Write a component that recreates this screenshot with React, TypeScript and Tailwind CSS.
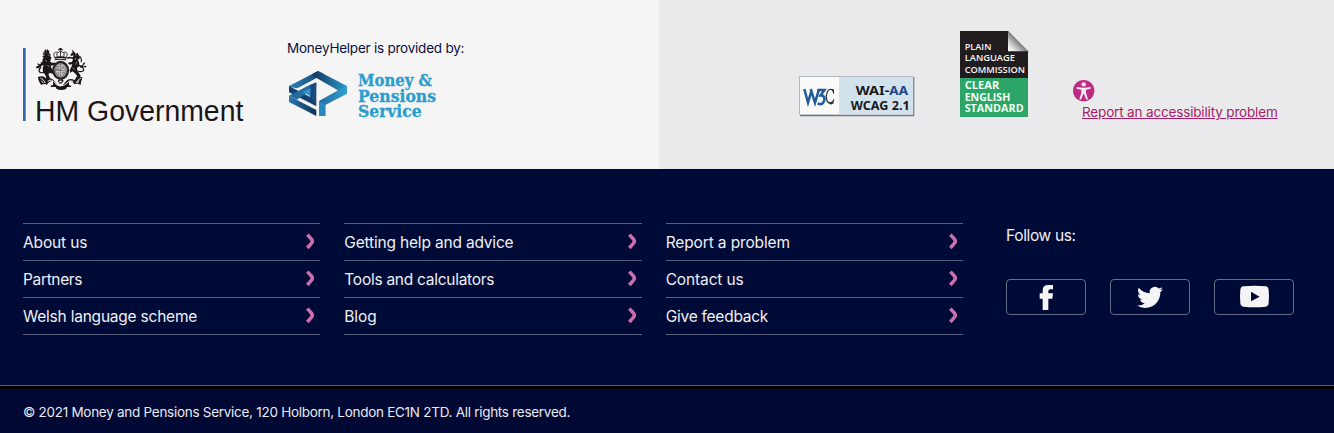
import React from "react";

const columns = [
  [
    { label: "About us", tracking: "tracking-[-0.130px]" },
    { label: "Partners", tracking: "tracking-[-0.350px]" },
    { label: "Welsh language scheme", tracking: "tracking-[-0.220px]" },
  ],
  [
    { label: "Getting help and advice", tracking: "tracking-[-0.180px]" },
    { label: "Tools and calculators", tracking: "tracking-[-0.270px]" },
    { label: "Blog", tracking: "tracking-[-0.130px]" },
  ],
  [
    { label: "Report a problem", tracking: "tracking-[-0.130px]" },
    { label: "Contact us", tracking: "tracking-[-0.130px]" },
    { label: "Give feedback", tracking: "tracking-[-0.250px]" },
  ],
];

function Crest() {
  return (
    <g fill="#1c1518">
      {/* crown */}
      <path d="M133 39h7v6h-7zM129 43h15v3h-15z" />
      <path
        d="M120 68C112 58 118 49 127 52c4 2 7-3 9.500-5c2 2 6 7 10 5c9-3 14 6 6 16M127 53c-3 5-1 10 2 14M146 53c3 5 1 10-2 14M136.500 48v19"
        fill="none"
        stroke="#1c1518"
        strokeWidth="2.600"
      />
      <path d="M118 66q18-5 37 0l-1 5q-17-4-35 0zM119 73q18-4 35 0v3q-18-4-35 0z" />
      {/* shield */}
      <ellipse cx="137" cy="106" rx="22" ry="25" fill="#f5f5f5" stroke="#1c1518" strokeWidth="7" />
      <ellipse cx="137" cy="106" rx="16.500" ry="19.500" fill="#cfcdce" stroke="#1c1518" strokeWidth="1.500" />
      <path
        d="M121 106h32M137 87v38M124 94h10M124 99h9M123 103h11M141 94l8 8M148 93l-7 9M126 111v8M131 110v13M142 112h8M141 117h9M143 122h5"
        fill="none"
        stroke="#4a4346"
        strokeWidth="1.800"
      />
      <ellipse cx="137" cy="106" rx="22" ry="25" fill="none" stroke="#b8b6b7" strokeWidth="1" strokeDasharray="2 3" />
      {/* lion */}
      <path d="M88 47l3-4 3 4 3-5 3 5 3-2-1 8 5 6-1 6 4 3-3 5-1 8 8 3 6-2 2 4-7 5-8 1 3 9 4 8-1 8-8-4-5 5 5 11-3 6-9 1-4-4 5-3-3-9-7-9-1-12 3-9-6 2-8 5-5-3 7-5 8-7 1-9 3-6-5-3 5-3-3-5z" />
      <path d="M86 48l3 4M84 55l5 1M83 62l6-1M94 50v3M98 59l5 2M91 76l5 4M97 91l6 4" stroke="#f5f5f5" strokeWidth="1.500" />
      <path d="M88 112c-13 4-19-3-14-10c5-5 3-10-1-9c-5 1-4 7-10 4M75 101l-9-7M76 91l-8-5" fill="none" stroke="#1c1518" strokeWidth="3.600" />
      <path d="M76 83l12-4 2 4-10 6z" />
      {/* unicorn */}
      <path d="M171 43l12 14 5-4 3 7 4 6-2 7-5 0 4 9 1 7 8 3 3 6-6 1-5-5-7 4 1 8 5 8 5 8-3 7-8 3-4-3 5-5-7-9-8-6-6 5-2-8 6-12 2-7-8 2-5-4 4-3 8-1 3-9-9-2-7 2-3-4 7-3 12 2 2-6-8 2-2-4 7-7z" />
      <path d="M180 58l4 3M183 68l-3 7M186 80l-4 9M173 99l6 4" stroke="#f5f5f5" strokeWidth="1.500" />
      <path d="M189 108c13 5 20-1 15-9c-4-5-2-12 4-9M205 95l9 0M204 87l6-4M194 63q8 10 4 19" fill="none" stroke="#1c1518" strokeWidth="3.400" />
      {/* scroll */}
      <path d="M69 127c1 9 3 14 10 23q8-5 17-1q7-12 18-11v13q-9-2-7 5l15 0q1 9 16 9q18 0 18-9l12 0q3-5-6-5v-13q10-1 17 10q9-4 18 2c0-11 5-17 5-23q-8-3-17-1l-6 9q-17-8-25 3l-11 13q-9 5-18-3l-9-13q-9-10-22-2l-6-8q-10-3-19 1z" />
      <path
        d="M76 129q10 3 15 15M98 139q13-8 20 3q5 10 18 11q13-1 20-9q7-11 19-5M198 129q-9 4-15 15M79 137l6 7M192 137l-5 8"
        fill="none"
        stroke="#f5f5f5"
        strokeWidth="2.800"
      />
      <path d="M128 138l5-7 4 4 5-4 4 7-7 8h-5z" />
      <path d="M133 137h7v5h-7z" fill="#f5f5f5" />
    </g>
  );
}

function GovernmentLogo() {
  return (
    <svg className="block h-[95px] w-[240px]" viewBox="0 0 720 285" role="img">
      <rect x="24" y="39" width="8" height="219" fill="#2e6ba5" />
      <Crest />
      <text
        x="60"
        y="259"
        textLength="625"
        lengthAdjust="spacingAndGlyphs"
        fontFamily="'Liberation Sans', Arial, sans-serif"
        fontSize="90"
        fill="#1c1518"
      >
        HM Government
      </text>
    </svg>
  );
}

function PensionsLogo() {
  return (
    <svg className="block h-[60px] w-[170px]" viewBox="0 90 510 180" role="img">
      <defs>
        <linearGradient id="top" x1="0" x2="1">
          <stop offset="0" stopColor="#12365f" />
          <stop offset="1" stopColor="#2d9bcf" />
        </linearGradient>
        <linearGradient id="side" x1="0" x2="1">
          <stop offset="0" stopColor="#2a86ba" />
          <stop offset="1" stopColor="#163f6c" />
        </linearGradient>
        <linearGradient id="base" x1="0" x2="1">
          <stop offset="0" stopColor="#277aaf" />
          <stop offset="1" stopColor="#12305a" />
        </linearGradient>
        <linearGradient id="bowl" x1="0" x2="1">
          <stop offset="0" stopColor="#226c9f" />
          <stop offset="1" stopColor="#2f9fd2" />
        </linearGradient>
      </defs>
      <g transform="translate(18 96)">
        <path d="M9 57L96 12L114 21L34 64L9 60Z" fill="url(#side)" />
        <path d="M96 12L183 57V66L165 77L150 67L80 26V20Z" fill="url(#top)" />
        <path d="M183 57V80L118 114V147H100V101L158 69Z" fill="url(#bowl)" />
        <path d="M100 101L118 114V147H100Z" fill="#2887bb" />
        <path d="M9 57L91 100V118L9 76Z" fill="#16426f" />
        <path d="M9 86L37 83L91 111V118L48 96L91 118V147L9 105Z" fill="none" />
        <path d="M9 86L91 129V147L9 105Z" fill="url(#base)" />
        <path d="M9 86L72 53L91 47V57L33 98Z" fill="#246c9f" />
        <path d="M72 55L91 46V101L72 91Z" fill="#1b4b7c" />
        <path d="M50 76L73 64V88Z" fill="#2f99cc" />
      </g>
      <g fill="#2b9dcd" stroke="#2b9dcd" strokeWidth="1" fontFamily="'DejaVu Serif', serif" fontWeight="700" fontSize="50">
        <text x="234" y="152" textLength="222" lengthAdjust="spacingAndGlyphs">Money &amp;</text>
        <text x="234" y="200" textLength="234" lengthAdjust="spacingAndGlyphs">Pensions</text>
        <text x="234" y="247" textLength="191" lengthAdjust="spacingAndGlyphs">Service</text>
      </g>
    </svg>
  );
}

function W3CBadge() {
  return (
    <svg className="block h-[52px] w-[135px]" viewBox="0 0 405 156" role="img">
      <path d="M30 21H373V139H30Z" fill="#75777b" />
      <path d="M27 18H370V135H27Z" fill="#b3b8bd" />
      <path d="M30 21H368V133H30Z" fill="#fafafa" />
      <path d="M147 21H368V133H147Z" fill="#d2e2ec" />
      <g fontFamily="'Noto Sans', sans-serif" fontWeight="700">
        <text x="197" y="75" fontSize="38" fill="#17191d" textLength="101" lengthAdjust="spacingAndGlyphs">WAI-</text>
        <text x="298" y="75" fontSize="38" fill="#1f4788" textLength="56" lengthAdjust="spacingAndGlyphs">AA</text>
        <text x="182" y="120" fontSize="38" fill="#17191d" textLength="177" lengthAdjust="spacingAndGlyphs">WCAG 2.1</text>
      </g>
      <path d="M43 57L54 98L65 60M62 57L75 98L87 58" fill="none" stroke="#215b99" strokeWidth="7.500" />
      <path d="M82 60H103L92 76Q105 76 103 90Q99 108 83 100" fill="none" stroke="#215b99" strokeWidth="8" />
      <path d="M131 70L129 61Q118 54 112 65Q107 76 110 89Q113 101 123 98Q129 96 132 88" fill="none" stroke="#222b34" strokeWidth="3.500" />
      <path d="M126 58L132 58V73ZM112 91Q119 105 132 94L131 100Q119 110 112 91Z" fill="#222b34" />
    </svg>
  );
}

function PlainLanguageBadge() {
  return (
    <svg className="block h-[100px] w-[90px]" viewBox="0 0 270 300" role="img">
      <defs>
        <linearGradient id="fold" x1="0" y1="1" x2="0.550" y2="0.450">
          <stop offset="0" stopColor="#ffffff" />
          <stop offset=".35" stopColor="#e2e2e4" />
          <stop offset="1" stopColor="#6d6e71" />
        </linearGradient>
      </defs>
      <path d="M30 18H174L234 79V160H30Z" fill="#211c1d" />
      <path d="M174 18L234 79H174Z" fill="url(#fold)" />
      <rect x="30" y="159" width="204" height="117" fill="#2da567" />
      <g fill="#f7f7f7" fontFamily="'Open Sans', sans-serif" fontWeight="600" fontSize="26">
        <text x="44" y="75" textLength="80" lengthAdjust="spacingAndGlyphs">PLAIN</text>
        <text x="44" y="109" textLength="151" lengthAdjust="spacingAndGlyphs">LANGUAGE</text>
        <text x="44" y="143" textLength="181" lengthAdjust="spacingAndGlyphs">COMMISSION</text>
      </g>
      <g fill="#f2fff7" fontFamily="'Open Sans', sans-serif" fontWeight="700" fontSize="29">
        <text x="44" y="192" textLength="104" lengthAdjust="spacingAndGlyphs">CLEAR</text>
        <text x="44" y="227" textLength="137" lengthAdjust="spacingAndGlyphs">ENGLISH</text>
        <text x="44" y="261" textLength="177" lengthAdjust="spacingAndGlyphs">STANDARD</text>
      </g>
    </svg>
  );
}

function AccessibilityIcon() {
  return (
    <svg className="ml-px block size-[22px]" viewBox="0 0 66 66">
      <circle cx="32" cy="32" r="32" fill="#bd2b82" />
      <circle cx="32" cy="13" r="6.500" fill="#f6e9f1" />
      <path d="M11 21Q32 26 53 21V26L39 29V39L45 57L40 59L33 42H31L24 59L19 57L25 39V29L11 26Z" fill="#f6e9f1" />
    </svg>
  );
}

function Chevron() {
  return (
    <svg className="mt-[9px] mr-[5px] block h-[17px] w-[9px]" viewBox="0 0 27 51">
      <path d="M4 5L16 18Q22 25 16 31L4 45" fill="none" stroke="#cc6fae" strokeWidth="10.500" />
    </svg>
  );
}

const socials = [
  {
    name: "facebook",
    art: <path d="M128 270V236H119V220H128V211Q128 195 145 195H159V208H151Q145 208 145 214V220H159L157 236H145V270Z" transform="translate(-18 -177)" />,
  },
  {
    name: "twitter",
    art: (
      <g transform="translate(81 16) scale(3.250)">
        <path d="M23.950 4.570a10 10 0 0 1-2.820.770 4.960 4.960 0 0 0 2.160-2.720c-.950.550-2.010.960-3.130 1.180a4.920 4.920 0 0 0-8.380 4.480C7.690 8.090 4.070 6.130 1.640 3.160a4.820 4.820 0 0 0-.670 2.480c0 1.710.870 3.210 2.190 4.100a4.900 4.900 0 0 1-2.230-.620v.060a4.920 4.920 0 0 0 3.950 4.830 5 5 0 0 1-2.210.080 4.940 4.940 0 0 0 4.600 3.420A9.870 9.870 0 0 1 0 19.540a14 14 0 0 0 7.550 2.210c9.050 0 14-7.500 14-13.980 0-.210 0-.420-.020-.630a9.940 9.940 0 0 0 2.420-2.570z" />
      </g>
    ),
  },
  {
    name: "youtube",
    art: <path fillRule="evenodd" d="M88 22Q122 18 155 22Q163 23 164 33Q166 52 164 72Q163 82 155 83Q122 86 88 83Q80 82 79 72Q77 52 79 33Q80 23 88 22ZM111 38V67L137 53Z" />,
  },
];

export default function App() {
  return (
    <footer className="h-[433px] w-[1334px] overflow-hidden bg-[#000a37] font-['Inter',sans-serif]">
      <section className="flex h-[169px]">
        <div className="flex w-[659px] bg-[#f5f5f5] pt-[35px] pl-[15px]">
          <GovernmentLogo />
          <div className="ml-[25px] pt-[4px]">
            <p className="ml-[7px] text-[13.500px] leading-[18px] tracking-[-0.230px] whitespace-nowrap text-[#0a1040]">
              MoneyHelper is provided by:
            </p>
            <div className="mt-[8px]"><PensionsLogo /></div>
          </div>
        </div>
        <div className="flex flex-1 bg-[#eaeaec] pl-[131px]">
          <div className="pt-[70px]"><W3CBadge /></div>
          <div className="ml-[25px] pt-[25px]"><PlainLanguageBadge /></div>
          <div className="ml-[32px] pt-[80px]">
            <AccessibilityIcon />
            <a className="ml-[10px] block text-[13.500px] leading-[20px] tracking-[-0.160px] whitespace-nowrap text-[#a71d68] underline">
              Report an accessibility problem
            </a>
          </div>
        </div>
      </section>
      <section className="flex h-[216px] pt-[54px] pl-[23px]">
        <nav className="grid w-[940px] grid-cols-3 gap-6">
          {columns.map((items) => (
            <ul key={items[0].label} className="h-[112px] border-t border-[#59607f]">
              {items.map((item) => (
                <li key={item.label} className="flex h-[37px] justify-between border-b border-[#59607f]">
                  <span className={`text-[15.500px] leading-[37px] whitespace-nowrap text-[#eff0f5] ${item.tracking}`}>{item.label}</span>
                  <Chevron />
                </li>
              ))}
            </ul>
          ))}
        </nav>
        <div className="ml-[43px] pt-px">
          <p className="text-[15.500px] leading-6 tracking-[-0.350px] text-[#eff0f5]">Follow us:</p>
          <div className="mt-[31px] flex gap-6">
            {socials.map((social) => (
              <a key={social.name} className="block h-[36px] w-[80px] rounded-[4px] border border-[#656b87]">
                <svg className="-mt-px -ml-px block h-[36px] w-[80px]" viewBox="0 0 240 108" fill="#f5f5f7">
                  {social.art}
                </svg>
              </a>
            ))}
          </div>
        </div>
      </section>
      <section className="h-12 border-t border-[#5c5d6c] bg-[#000833]">
        <div className="h-[3px] bg-black" />
        <p className="mt-[13px] ml-[23px] text-[13.500px] leading-5 tracking-[-0.280px] whitespace-nowrap text-[#e9eaf0]">
          © 2021 Money and Pensions Service, 120 Holborn, London EC1N 2TD. All rights reserved.
        </p>
      </section>
    </footer>
  );
}
